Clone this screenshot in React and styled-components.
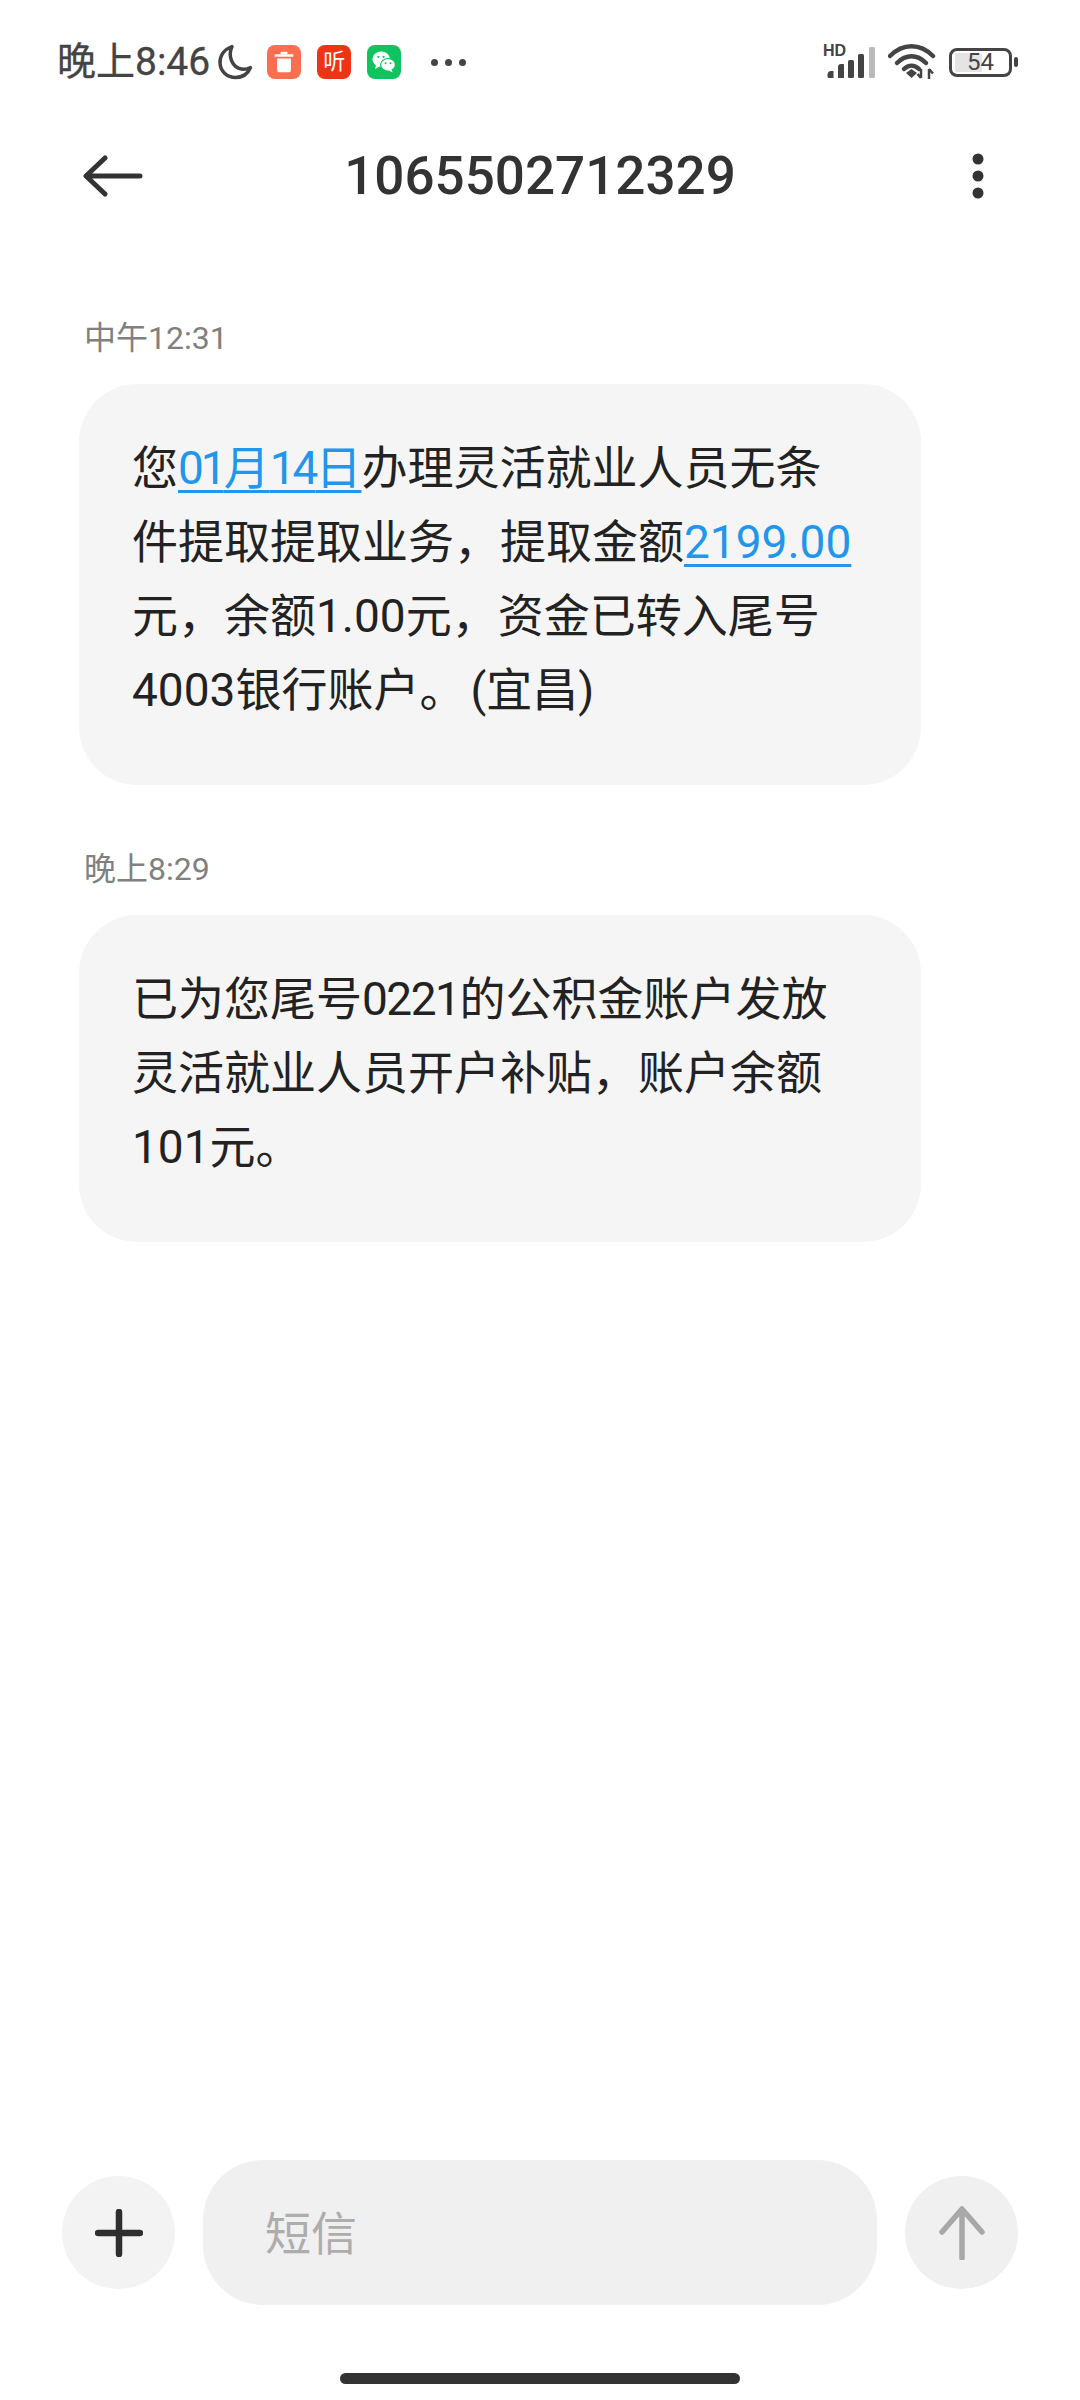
import styled, { createGlobalStyle } from 'styled-components';

const GlobalStyle = createGlobalStyle`
  html, body {
    margin: 0;
    padding: 0;
    background: #fff;
  }
  body {
    font-family: Roboto, "Noto Sans CJK SC", sans-serif;
  }
`;

const messages = [
  {
    time: '中午12:31',
    lines: [
      ['您', { link: '01', tracking: -3 }, { link: '月' }, { link: '14', tracking: -3 }, { link: '日' }, '办理灵活就业人员无条'],
      ['件提取提取业务，提取金额', { link: '2199.00' }],
      ['元，余额1.00元，资金已转入尾号'],
      ['4003银行账户', { text: '。', tracking: 5 }, '(宜昌)'],
    ],
  },
  {
    time: '晚上8:29',
    lines: [
      ['已为您尾号', { text: '0221', tracking: -1.5 }, '的公积金账户发放'],
      ['灵活就业人员开户补贴，账户余额'],
      ['101元。'],
    ],
  },
];

const MoonIcon = () => (
  <svg width="36" height="36" viewBox="0 0 36 36" fill="none">
    <path
      d="M14 2.500C6.500 5.500 2 11.500 2 18.500c0 8.500 7 15 15.500 15 7 0 12.500-4 15-10-3 1.500-6 2-9 1.500C14.500 23.500 9.500 12.500 14 2.500z"
      stroke="#444"
      strokeWidth="3.500"
      strokeLinejoin="round"
    />
  </svg>
);

const TrashGlyph = () => (
  <svg width="24" height="26" viewBox="0 0 22 24" fill="#fff">
    <rect x="0" y="3" width="22" height="3" rx="1" />
    <rect x="7" y="0" width="8" height="3" rx="1" />
    <path d="M3 8h16v13a3 3 0 0 1-3 3H6a3 3 0 0 1-3-3z" />
  </svg>
);

const WeChatGlyph = () => (
  <svg width="30" height="28" viewBox="0 0 30 28">
    <ellipse cx="11.500" cy="10.500" rx="11" ry="9.500" fill="#fff" />
    <path d="M5 17l-1 6 6-4z" fill="#fff" />
    <ellipse cx="20" cy="17.500" rx="10" ry="8.500" fill="#0fc45f" />
    <ellipse cx="20" cy="17.500" rx="8.500" ry="7.200" fill="#fff" />
    <path d="M24 23l2 4-5-2.500z" fill="#fff" />
    <circle cx="8" cy="7.500" r="1.400" fill="#0fc45f" />
    <circle cx="14.500" cy="7.500" r="1.400" fill="#0fc45f" />
    <circle cx="17" cy="15.500" r="1.200" fill="#0fc45f" />
    <circle cx="23" cy="15.500" r="1.200" fill="#0fc45f" />
  </svg>
);

const SignalIcon = () => (
  <svg width="50" height="31" viewBox="0 0 50 31">
    <path d="M4 31a1.500 1.500 0 0 1-1.500-1.500v-2A4 4 0 0 1 6 24h2.500v7z" fill="#444" />
    <path d="M13 31v-11a3 3 0 0 1 3-3h2a1 1 0 0 1 1 1v13z" fill="#444" />
    <rect x="23" y="13" width="6" height="18" rx="1.500" fill="#444" />
    <rect x="33" y="7" width="6" height="24" rx="1.500" fill="#444" />
    <rect x="44" y="0" width="6" height="31" rx="1.500" fill="#b9b9b9" />
  </svg>
);

const WifiIcon = () => (
  <svg width="48" height="36" viewBox="0 0 48 36" fill="none">
    <path d="M2 12C15 -1 32 -1 45 12" stroke="#444" strokeWidth="4.500" strokeLinecap="round" />
    <path d="M9 19C18 10 29 10 38 19" stroke="#444" strokeWidth="4.500" strokeLinecap="round" />
    <path d="M16 25C20.500 20.500 26.500 20.500 31 25" stroke="#444" strokeWidth="4.500" strokeLinecap="round" />
    <path d="M18 29l5.500-4 5.500 4-5.500 5z" fill="#444" />
    <path d="M33 25v9M33 34l-3.500-4M41 35v-10M41 25l4 4.500" stroke="#444" strokeWidth="2.500" />
  </svg>
);

const BackIcon = () => (
  <svg width="60" height="42" viewBox="0 0 60 42" fill="none">
    <path
      d="M57 21H4M22 3L3 21l19 18"
      stroke="#333"
      strokeWidth="5"
      strokeLinecap="round"
      strokeLinejoin="round"
    />
  </svg>
);

const MoreIcon = () => (
  <svg width="12" height="46" viewBox="0 0 12 46" fill="#333">
    <circle cx="6" cy="6" r="5.500" />
    <circle cx="6" cy="23" r="5.500" />
    <circle cx="6" cy="40" r="5.500" />
  </svg>
);

const PlusIcon = () => (
  <svg width="48" height="48" viewBox="0 0 48 48" fill="none">
    <path d="M24 3v42M3 24h42" stroke="#2e2e2e" strokeWidth="6.500" strokeLinecap="round" />
  </svg>
);

const SendIcon = () => (
  <svg width="46" height="54" viewBox="0 0 46 54" fill="none">
    <path
      d="M23 52V4M3 26L23 3l20 23"
      stroke="#a8a8a8"
      strokeWidth="5.500"
      strokeLinecap="round"
      strokeLinejoin="round"
    />
  </svg>
);

const App = () => {
  return (
    <Page>
      <GlobalStyle />
      <StatusBar>
        <StatusLeft>
          <Clock>晚上8:46</Clock>
          <MoonSlot>
            <MoonIcon />
          </MoonSlot>
          <AppBadge $color="#fb6e4f">
            <TrashGlyph />
          </AppBadge>
          <AppBadge $color="#ee3414">听</AppBadge>
          <AppBadge $color="#0fc45f">
            <WeChatGlyph />
          </AppBadge>
          <MoreNotifications>
            <i />
            <i />
            <i />
          </MoreNotifications>
        </StatusLeft>
        <StatusRight>
          <SignalWrap>
            <HdLabel>HD</HdLabel>
            <SignalIcon />
          </SignalWrap>
          <WifiIcon />
          <Battery>
            <BatteryBody>
              <BatteryLevel />
              <BatteryText>54</BatteryText>
            </BatteryBody>
            <BatteryNub />
          </Battery>
        </StatusRight>
      </StatusBar>

      <Header>
        <BackIcon />
        <Title>1065502712329</Title>
        <MoreButton>
          <MoreIcon />
        </MoreButton>
      </Header>

      <Messages>
        {messages.map((message) => (
          <Message key={message.time}>
            <Time>{message.time}</Time>
            <Bubble>
              {message.lines.map((line, i) => (
                <Line key={i}>
                  {line.map((part, j) => {
                    if (typeof part === 'string') return part;
                    if (part.link) {
                      return (
                        <BubbleLink key={j} $tracking={part.tracking}>
                          {part.link}
                        </BubbleLink>
                      );
                    }
                    return (
                      <Tracked key={j} $tracking={part.tracking}>
                        {part.text}
                      </Tracked>
                    );
                  })}
                </Line>
              ))}
            </Bubble>
          </Message>
        ))}
      </Messages>

      <Composer>
        <RoundButton $color="#f3f3f3">
          <PlusIcon />
        </RoundButton>
        <InputBox>短信</InputBox>
        <RoundButton $color="#f0f0f0">
          <SendIcon />
        </RoundButton>
      </Composer>

      <HomeArea>
        <HomeBar />
      </HomeArea>
    </Page>
  );
};

const Page = styled.div`
  width: 1080px;
  height: 2400px;
  display: flex;
  flex-direction: column;
  background: #fff;
  overflow: hidden;
`;

const StatusBar = styled.div`
  height: 124px;
  padding: 0 62px 0 57px;
  box-sizing: border-box;
  display: flex;
  align-items: center;
  justify-content: space-between;
`;

const StatusLeft = styled.div`
  display: flex;
  align-items: center;
  gap: 16px;
`;

const Clock = styled.span`
  font-size: 39px;
  line-height: 44px;
  color: #444;
  margin-right: -8px;
  -webkit-text-stroke: 0.3px #444;
`;

const MoonSlot = styled.span`
  display: flex;
  margin-right: -3px;
`;

const AppBadge = styled.span`
  width: 34px;
  height: 34px;
  border-radius: 8px;
  background: ${(p) => p.$color};
  color: #fff;
  font-size: 22px;
  line-height: 1;
  display: flex;
  align-items: center;
  justify-content: center;
  overflow: hidden;

  svg {
    transform: scale(0.8);
    flex: none;
  }
`;

const MoreNotifications = styled.span`
  display: flex;
  gap: 7px;
  margin-left: 14px;

  i {
    width: 7px;
    height: 7px;
    border-radius: 50%;
    background: #444;
  }
`;

const StatusRight = styled.div`
  display: flex;
  align-items: center;
  gap: 13px;
`;

const SignalWrap = styled.div`
  position: relative;
  width: 50px;
  height: 31px;
  display: flex;
`;

const HdLabel = styled.span`
  position: absolute;
  left: -2px;
  top: -4px;
  font-family: "Liberation Sans", sans-serif;
  font-size: 16px;
  line-height: 16px;
  font-weight: 700;
  color: #444;
`;

const Battery = styled.div`
  display: flex;
  align-items: center;
  gap: 2px;
`;

const BatteryBody = styled.div`
  position: relative;
  width: 63px;
  height: 29px;
  box-sizing: border-box;
  border: 3.500px solid #444;
  border-radius: 8px;
  display: flex;
  align-items: center;
  justify-content: center;
  overflow: hidden;
`;

const BatteryLevel = styled.div`
  position: absolute;
  left: 3px;
  top: 2px;
  bottom: 2px;
  width: 27px;
  border-radius: 2px;
  background: #e4e4e4;
`;

const BatteryText = styled.span`
  position: relative;
  font-size: 24px;
  line-height: 1;
  color: #444;
`;

const BatteryNub = styled.div`
  width: 4px;
  height: 10px;
  border-radius: 2px;
  background: #444;
`;

const Header = styled.div`
  height: 104px;
  padding: 0 83px;
  box-sizing: border-box;
  display: grid;
  grid-template-columns: 1fr auto 1fr;
  align-items: center;
`;

const Title = styled.h1`
  margin: 0;
  font-size: 53px;
  line-height: 60px;
  font-weight: 500;
  color: #333;
`;

const MoreButton = styled.div`
  display: flex;
  justify-content: flex-end;
  padding-right: 13px;
`;

const Messages = styled.div`
  flex: 1;
  padding: 90px 0 0 79px;
  display: flex;
  flex-direction: column;
  gap: 64px;
`;

const Message = styled.div`
  display: flex;
  flex-direction: column;
  gap: 26px;
`;

const Time = styled.div`
  padding-left: 5px;
  font-size: 32px;
  line-height: 40px;
  color: #808080;
`;

const Bubble = styled.div`
  width: 842px;
  box-sizing: border-box;
  padding: 47px 53px 58px;
  border-radius: 58px;
  background: #f5f5f5;
  font-size: 46px;
  line-height: 74px;
  color: #222;
`;

const Line = styled.div`
  white-space: nowrap;
`;

const Tracked = styled.span`
  letter-spacing: ${(p) => p.$tracking || 0}px;
`;

const BubbleLink = styled.span`
  color: #2196ec;
  letter-spacing: ${(p) => p.$tracking || 0}px;
  text-decoration: underline;
  text-decoration-thickness: 3px;
  text-underline-offset: 6px;
`;

const Composer = styled.div`
  padding: 0 62px;
  height: 145px;
  display: flex;
  align-items: center;
  gap: 28px;
`;

const RoundButton = styled.div`
  width: 113px;
  height: 113px;
  flex: none;
  border-radius: 50%;
  background: ${(p) => p.$color};
  display: flex;
  align-items: center;
  justify-content: center;
`;

const InputBox = styled.div`
  flex: 1;
  height: 145px;
  box-sizing: border-box;
  padding: 0 0 6px 62px;
  border-radius: 60px;
  background: #f0f0f0;
  display: flex;
  align-items: center;
  font-size: 46px;
  color: #adadad;
`;

const HomeArea = styled.div`
  height: 95px;
  display: flex;
  align-items: flex-end;
  justify-content: center;
  padding-bottom: 16px;
  box-sizing: border-box;
`;

const HomeBar = styled.div`
  width: 400px;
  height: 11px;
  border-radius: 6px;
  background: #333;
`;

export default App;
